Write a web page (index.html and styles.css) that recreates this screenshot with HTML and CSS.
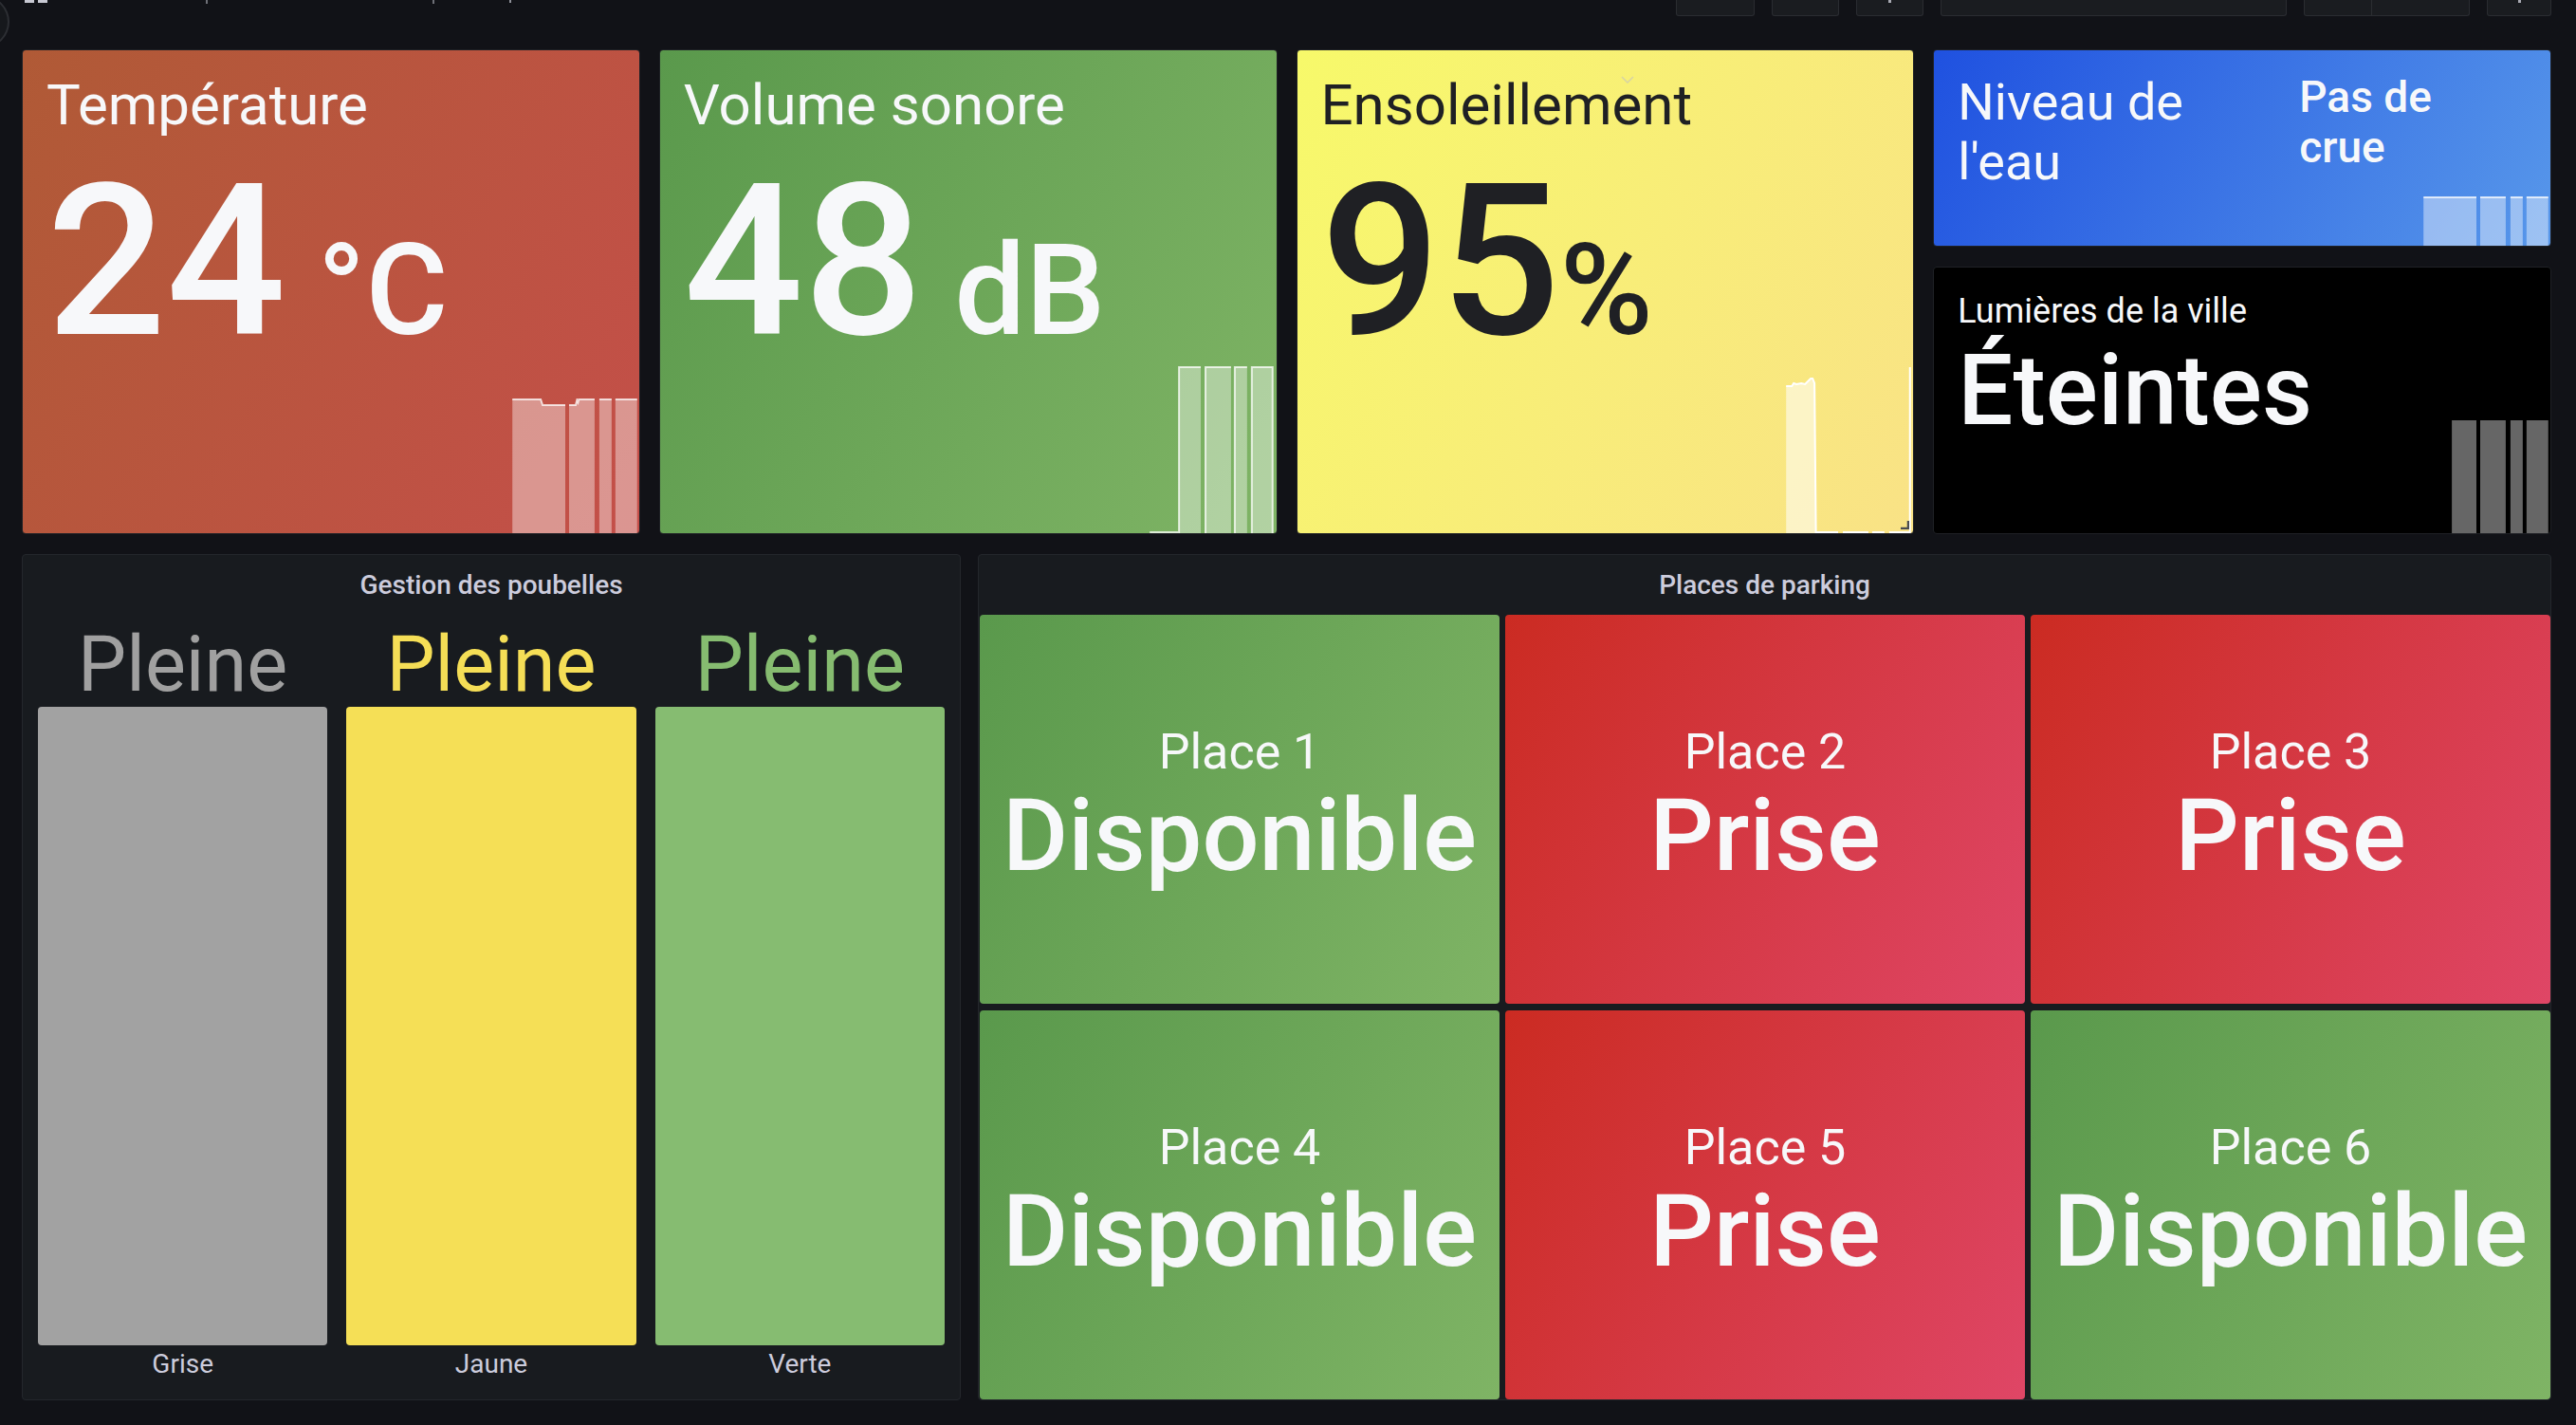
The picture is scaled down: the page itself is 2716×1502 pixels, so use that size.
FILE: index.html
```html
<!DOCTYPE html>
<html lang="fr">
<head>
<meta charset="utf-8">
<title>Ville intelligente</title>
<link rel="stylesheet" href="styles.css">
</head>
<body>
<span class="side-toggle"></span>
<header class="topbar">
  <div class="crumbs">
    <span class="frag frag-icon"><i></i><i></i></span>
    <span class="frag frag-bar b1"></span>
    <span class="frag frag-bar b2"></span>
    <span class="frag frag-dot"></span>
  </div>
  <div class="tools">
    <span class="tbtn w83"></span>
    <span class="tbtn w71"></span>
    <span class="tbtn w71"><em class="mark"></em></span>
    <span class="tbtn w365"><em class="mark m-left"></em><span class="tdiv d298"></span><em class="mark m-right"></em></span>
    <span class="tbtn w175"><span class="tdiv d70"></span></span>
    <span class="tbtn w68"><em class="mark"></em></span>
  </div>
</header>

<main class="dash">
  <section class="row-top">
    <article class="stat temp">
      <svg class="spark" style="height:142px" viewBox="0 0 652 142" preserveAspectRatio="none">
        <path class="sp-fill" d="M518 142 V1 H548 L550 7 H574 V142 Z M578 142 V7 H585 L586.5 1 L587.5 4 L588.5 1 H605 V142 Z M610 142 V1 H623 V142 Z M627 142 V1 H650 V142 Z"/>
        <path class="sp-line" d="M518 1 H548 L550 7 H574 M578 7 H585 L586.5 1 L587.5 4 L588.5 1 H605 M610 1 H623 M627 1 H650"/>
      </svg>
      <div class="stat-content">
        <h2 class="stat-title">Température</h2>
        <div class="stat-value">24<span class="unit"> °C</span></div>
      </div>
    </article>

    <article class="stat volume">
      <svg class="spark" style="height:176px" viewBox="0 0 652 176" preserveAspectRatio="none">
        <path class="sp-fill" d="M549 176 V1 H572 V176 Z M577 176 V1 H604 V176 Z M608 176 V1 H621 V176 Z M626 176 V1 H648 V176 Z"/>
        <path class="sp-line" d="M518 175 H549 V1 H572 M577 176 V1 H604 M608 176 V1 H621 M626 176 V1 H648 V176"/>
      </svg>
      <div class="stat-content">
        <h2 class="stat-title">Volume sonore</h2>
        <div class="stat-value">48<span class="unit"> dB</span></div>
      </div>
    </article>

    <article class="stat soleil">
      <svg class="spark" style="height:176px" viewBox="0 0 652 176" preserveAspectRatio="none">
        <path class="sp-fill" d="M517 176 V21 H523 L525 18 L528 19 L533 18 L537 19 L540 16 L543 13 L545 13 L547 18 L548.5 176 Z"/>
        <path class="sp-line" d="M517 21 H523 L525 18 L528 19 L533 18 L537 19 L540 16 L543 13 L545 13 L547 18 L548.5 175 H572 M577 175 H604 M608 175 H621 M626 175 H648 V1"/>
      </svg>
      <svg class="hover-chevron" viewBox="0 0 14 8"><path d="M1 1 L7 7 L13 1"/></svg>
      <svg class="resize-handle" viewBox="0 0 10 10"><path d="M9 1 V9 H1"/></svg>
      <div class="stat-content">
        <h2 class="stat-title">Ensoleillement</h2>
        <div class="stat-value">95<span class="unit">%</span></div>
      </div>
    </article>

    <div class="stack">
      <article class="stat niveau">
        <svg class="spark" style="height:52px" viewBox="0 0 652 52" preserveAspectRatio="none">
          <path class="sp-fill" d="M518 52 V1 H574 V52 Z M578 52 V1 H605 V52 Z M610 52 V1 H623 V52 Z M627 52 V1 H650 V52 Z"/>
          <path class="sp-line" d="M518 1 H574 M578 1 H605 M610 1 H623 M627 1 H650"/>
        </svg>
        <div class="stat-content">
          <h2 class="stat-title">Niveau de l'eau</h2>
          <div class="stat-value">Pas de crue</div>
        </div>
      </article>

      <article class="stat lumieres">
        <svg class="spark" style="height:119px" viewBox="0 0 652 119" preserveAspectRatio="none">
          <path class="sp-fill" d="M548 119 V0 H574 V119 Z M578 119 V0 H605 V119 Z M610 119 V0 H623 V119 Z M627 119 V0 H650 V119 Z"/>
        </svg>
        <div class="stat-content">
          <h2 class="stat-title">Lumières de la ville</h2>
          <div class="stat-value">Éteintes</div>
        </div>
      </article>
    </div>
  </section>

  <section class="row-bottom">
    <article class="panel">
      <div class="panel-header"><h3 class="panel-title">Gestion des poubelles</h3></div>
      <div class="bins">
        <div class="bin">
          <div class="bin-value c-gray">Pleine</div>
          <div class="bin-bar bg-gray"></div>
          <div class="bin-label">Grise</div>
        </div>
        <div class="bin">
          <div class="bin-value c-yellow">Pleine</div>
          <div class="bin-bar bg-yellow"></div>
          <div class="bin-label">Jaune</div>
        </div>
        <div class="bin">
          <div class="bin-value c-green">Pleine</div>
          <div class="bin-bar bg-green"></div>
          <div class="bin-label">Verte</div>
        </div>
      </div>
    </article>

    <article class="panel">
      <div class="panel-header"><h3 class="panel-title">Places de parking</h3></div>
      <div class="tiles">
        <div class="tile green"><span class="tile-name">Place 1</span><span class="tile-state">Disponible</span></div>
        <div class="tile red"><span class="tile-name">Place 2</span><span class="tile-state">Prise</span></div>
        <div class="tile red"><span class="tile-name">Place 3</span><span class="tile-state">Prise</span></div>
        <div class="tile green"><span class="tile-name">Place 4</span><span class="tile-state">Disponible</span></div>
        <div class="tile red"><span class="tile-name">Place 5</span><span class="tile-state">Prise</span></div>
        <div class="tile green"><span class="tile-name">Place 6</span><span class="tile-state">Disponible</span></div>
      </div>
    </article>
  </section>
</main>
</body>
</html>
```

FILE: styles.css
```css
* { box-sizing: border-box; }

html, body {
  margin: 0;
  padding: 0;
}

body {
  position: relative;
  width: 2716px;
  height: 1502px;
  overflow: hidden;
  background: #111217;
  color: #ccccdc;
  font-family: Roboto, "Noto Sans", "DejaVu Sans", sans-serif;
}

/* ---------- cut-off top toolbar ---------- */
.side-toggle {
  position: absolute;
  left: -42px;
  top: -4px;
  width: 52px;
  height: 54px;
  border-radius: 50%;
  border: 2px solid #2c2e33;
  background: #16181c;
}

.topbar {
  height: 17px;
  display: flex;
  align-items: flex-start;
  padding-right: 26px;
}

.crumbs {
  display: flex;
  align-items: flex-start;
  height: 4px;
}

.frag { display: block; background: #c7c8d2; }
.frag-icon { display: flex; gap: 4px; margin-left: 26px; background: none; }
.frag-icon i { display: block; width: 10px; height: 3px; background: #c7c8d2; }
.frag-bar { width: 2px; height: 4px; background: #6e7077; }
.frag-bar.b1 { margin-left: 167px; }
.frag-bar.b2 { margin-left: 237px; }
.frag-dot { width: 2px; height: 3px; margin-left: 79px; background: #8e9098; }

.tools {
  margin-left: auto;
  display: flex;
  gap: 18px;
}

.tbtn {
  position: relative;
  display: flex;
  height: 17px;
  background: #1a1c20;
  border: 1px solid #2a2c31;
  border-top: none;
  border-radius: 0 0 3px 3px;
}
.tbtn.w83 { width: 83px; }
.tbtn.w71 { width: 71px; }
.tbtn.w365 { width: 365px; }
.tbtn.w175 { width: 175px; }
.tbtn.w68 { width: 68px; }

.tdiv { width: 1px; height: 100%; background: #2a2c31; }
.tdiv.d298 { margin-left: 298px; }
.tdiv.d70 { margin-left: 70px; }

.mark { display: block; width: 3px; height: 3px; margin: 0 auto; background: #a8a9b2; }
.mark.m-left { margin: 0 0 0 34px; }
.mark.m-right { margin: 0 0 0 46px; }

/* ---------- dashboard ---------- */
.dash {
  padding: 35px 26px 0 23px;
}

.row-top {
  display: grid;
  grid-template-columns: repeat(4, 1fr);
  column-gap: 20px;
  height: 511px;
}

.stack {
  display: flex;
  flex-direction: column;
  gap: 21px;
  min-height: 0;
}

/* ---------- stat panels ---------- */
.stat {
  position: relative;
  overflow: hidden;
  border: 1px solid #1f2126;
  border-radius: 4px;
  color: #f7f8fa;
}

.stat.temp { background: linear-gradient(120deg, #b05a36 0%, #c44f49 100%); }
.stat.volume { background: linear-gradient(120deg, #5a994c 0%, #7fb465 100%); }
.stat.soleil { background: linear-gradient(120deg, #f7f96a 0%, #f9e286 100%); color: #1f2024; }
.stat.niveau { background: linear-gradient(120deg, #1f51e0 0%, #5797ea 100%); height: 208px; flex: none; }
.stat.lumieres { background: #000000; flex: 1; }

.spark {
  position: absolute;
  left: 0;
  bottom: 0;
  display: block;
  width: 100%;
}
.sp-fill { fill: rgba(255, 255, 255, 0.4); }
.sp-line { fill: none; stroke: rgba(255, 255, 255, 0.75); stroke-width: 2; vector-effect: non-scaling-stroke; }
.soleil .sp-fill { fill: rgba(255, 255, 255, 0.55); }
.soleil .sp-line { stroke: #ffffff; }
.niveau .sp-fill { fill: rgba(255, 255, 255, 0.42); }

.stat-content {
  position: relative;
  padding: 22px 25px 0 25px;
}

.stat-title {
  margin: 0;
  font-size: 60px;
  line-height: 72px;
  font-weight: 400;
  white-space: nowrap;
}

.stat-value {
  margin-top: 18px;
  font-size: 222px;
  line-height: 222px;
  font-weight: 500;
  white-space: nowrap;
}

.unit { font-size: 0.6em; }

.hover-chevron {
  position: absolute;
  left: 341px;
  top: 27px;
  width: 14px;
  height: 8px;
}
.hover-chevron path { fill: none; stroke: rgba(190, 190, 200, 0.55); stroke-width: 1.6; }

.resize-handle {
  position: absolute;
  right: 4px;
  bottom: 4px;
  width: 10px;
  height: 10px;
}
.resize-handle path { fill: none; stroke: #4a4b50; stroke-width: 2.5; }

/* niveau : horizontal layout */
.niveau .stat-content {
  display: flex;
  align-items: flex-start;
  gap: 20px;
  padding-top: 23px;
}
.niveau .stat-title {
  flex: none;
  width: 340px;
  font-size: 54px;
  line-height: 63px;
  white-space: normal;
}
.niveau .stat-value {
  margin: 0;
  width: 200px;
  font-size: 46px;
  line-height: 53px;
  white-space: normal;
}

/* lumières */
.lumieres .stat-content { padding-top: 25px; }
.lumieres .stat-title { font-size: 36px; line-height: 42px; }
.lumieres .stat-value {
  margin-top: 11px;
  font-size: 103px;
  line-height: 103px;
}

/* ---------- bottom row ---------- */
.row-bottom {
  display: grid;
  grid-template-columns: 990px 1fr;
  column-gap: 18px;
  height: 892px;
  margin-top: 21px;
}

.panel {
  display: flex;
  flex-direction: column;
  min-height: 0;
  background: #181b1f;
  border: 1px solid #24272c;
  border-radius: 4px;
}

.panel-header {
  flex: none;
  height: 63px;
  display: flex;
  align-items: center;
  justify-content: center;
}

.panel-title {
  margin: 0;
  font-size: 28px;
  line-height: 32px;
  font-weight: 500;
  color: #ccccdc;
}

/* bins */
.bins {
  flex: 1;
  min-height: 0;
  display: grid;
  grid-template-columns: repeat(3, 1fr);
  column-gap: 20px;
  padding: 12px 16px 17px 16px;
}

.bin {
  display: flex;
  flex-direction: column;
  min-height: 0;
}

.bin-value {
  font-size: 81px;
  line-height: 82px;
  text-align: center;
  margin-bottom: 3px;
}

.bin-bar {
  flex: 1;
  border-radius: 4px;
}

.bin-label {
  font-size: 28px;
  line-height: 40px;
  text-align: center;
  color: #ccccdc;
}

.c-gray { color: #a0a0a0; }
.c-yellow { color: #f5de56; }
.c-green { color: #86bc70; }
.bg-gray { background: #a2a2a2; }
.bg-yellow { background: #f5df56; }
.bg-green { background: #86bc71; }

/* parking tiles */
.tiles {
  flex: 1;
  min-height: 0;
  display: grid;
  grid-template-columns: repeat(3, 1fr);
  grid-template-rows: repeat(2, 1fr);
  gap: 7px 6px;
  padding-left: 1px;
}

.tile {
  display: flex;
  flex-direction: column;
  align-items: center;
  justify-content: center;
  padding-bottom: 5px;
  border-radius: 4px;
  color: #f7f8fa;
}
.tile.green { background: linear-gradient(120deg, #5a994c 0%, #7fb465 100%); }
.tile.red { background: linear-gradient(120deg, #cb2b22 0%, #df4666 100%); }

.tile-name {
  font-size: 52px;
  line-height: 62px;
  font-weight: 400;
}

.tile-state {
  font-size: 106px;
  line-height: 115px;
  font-weight: 500;
}
```
